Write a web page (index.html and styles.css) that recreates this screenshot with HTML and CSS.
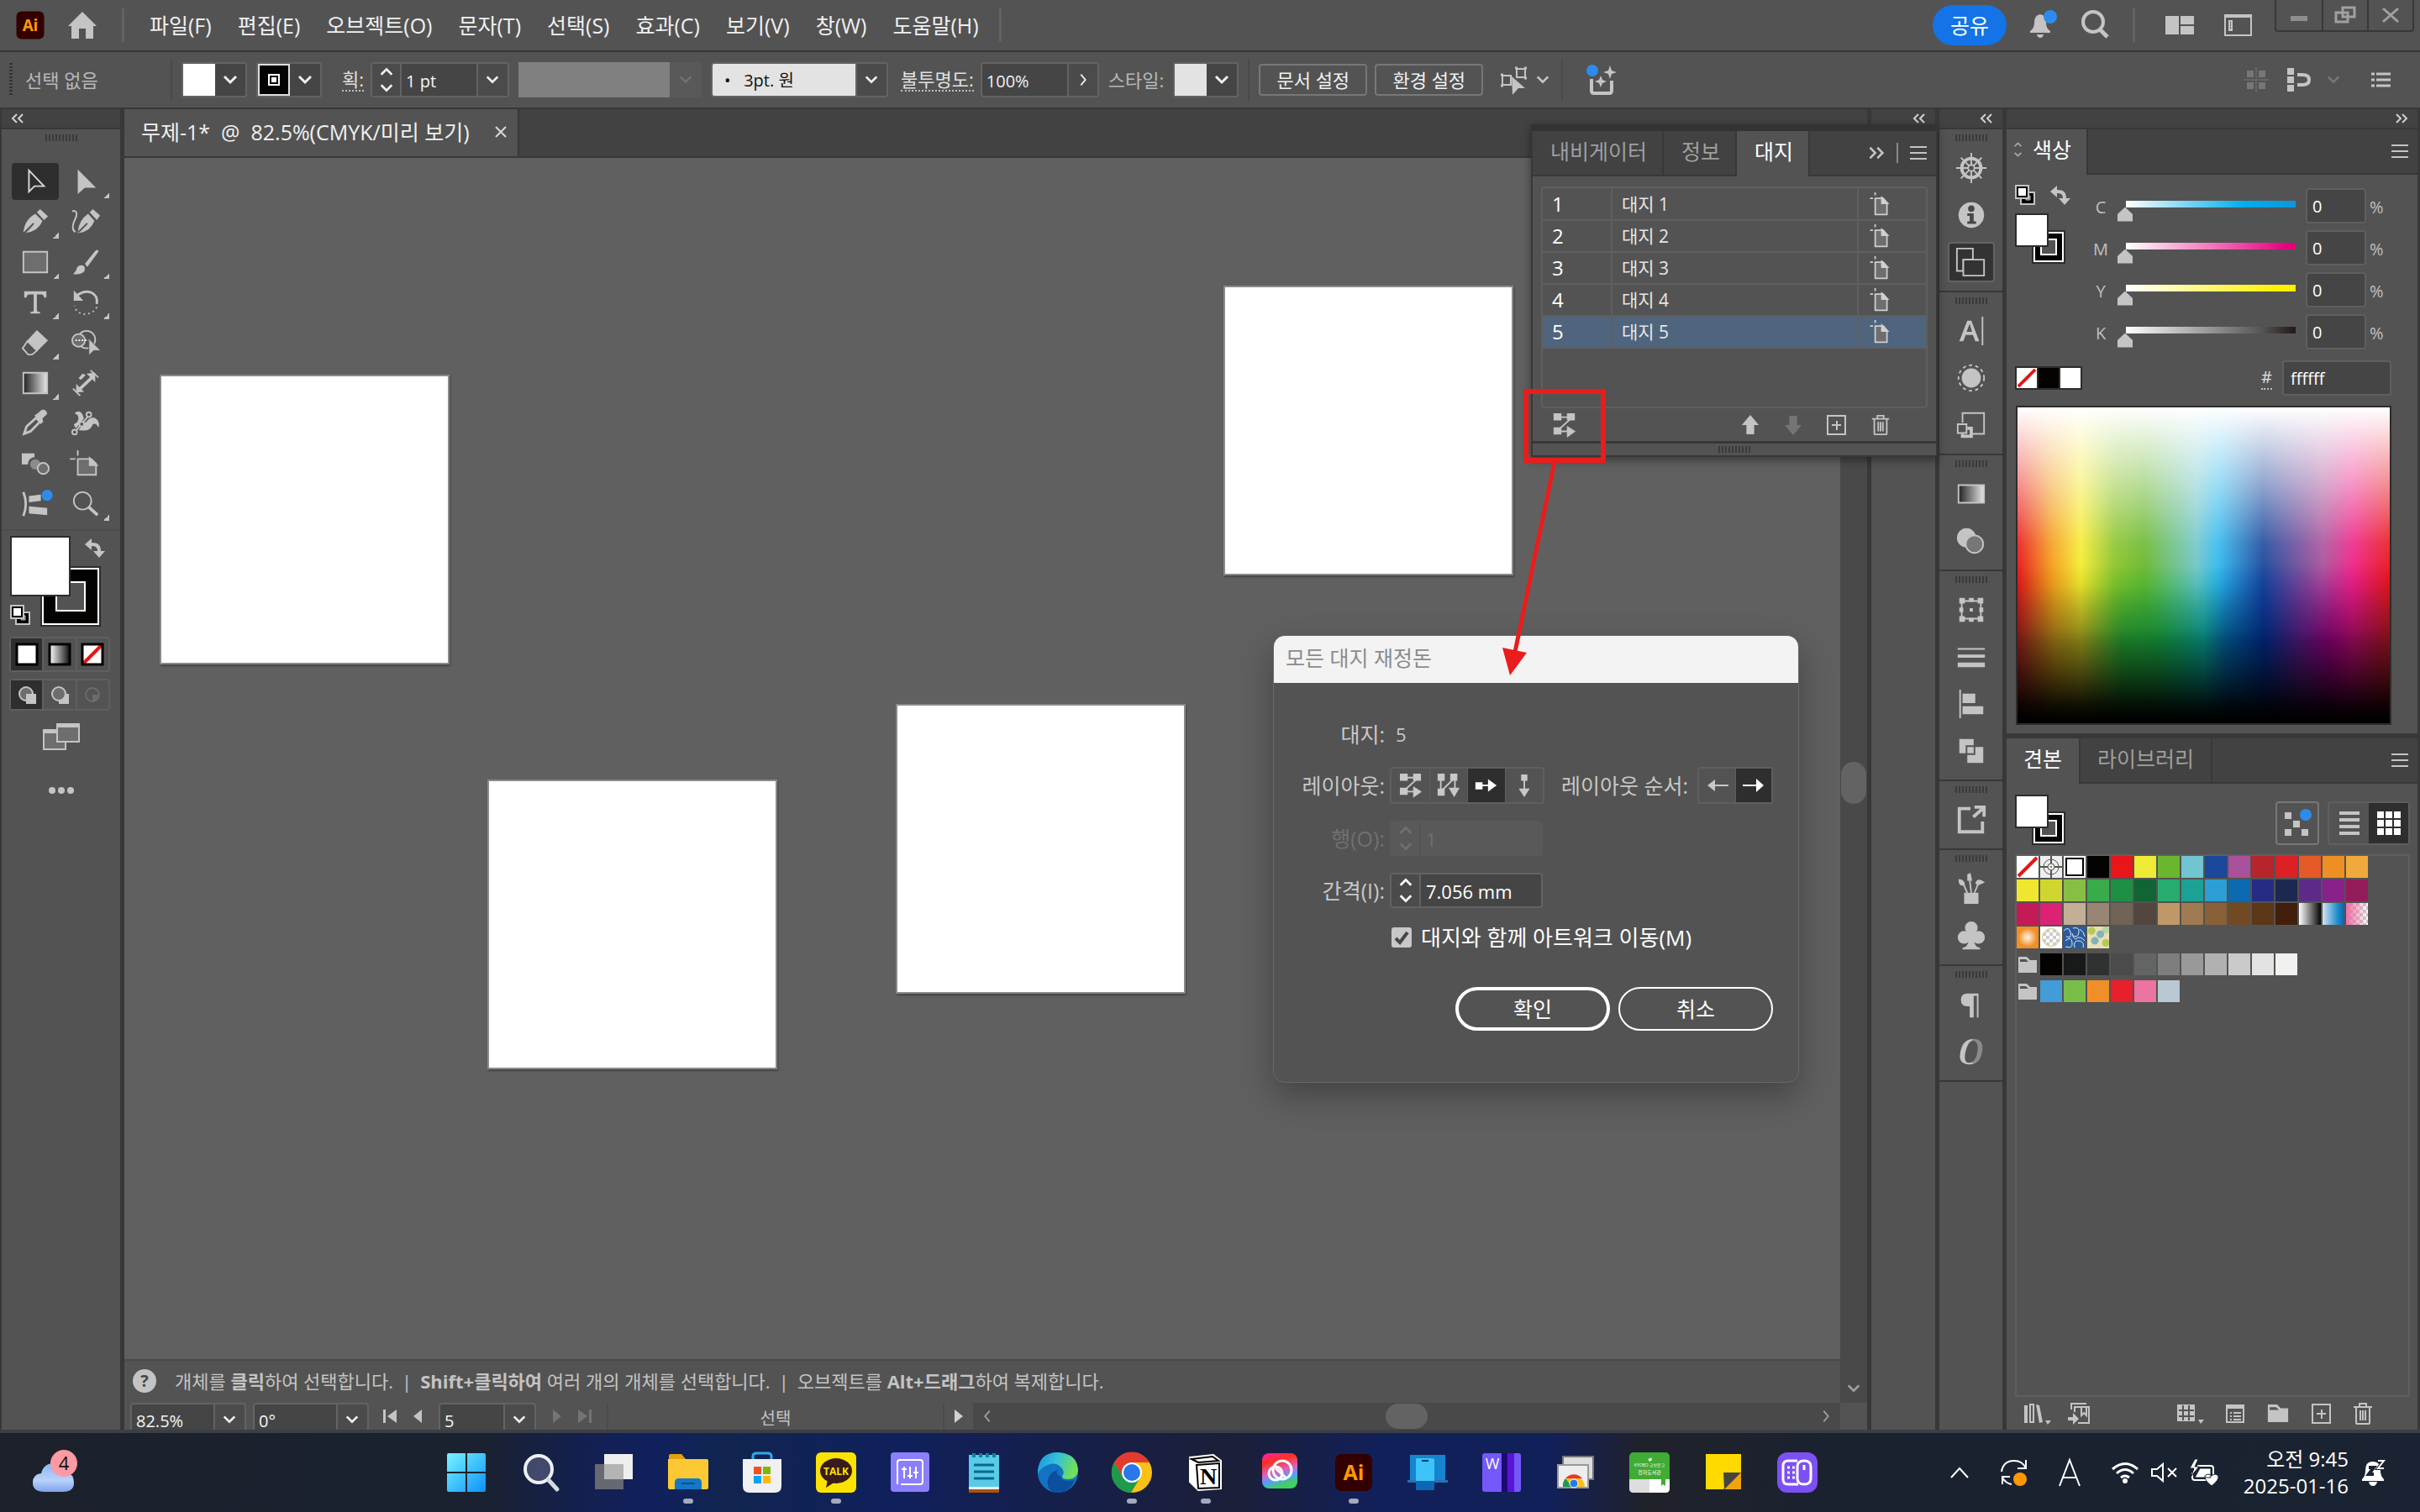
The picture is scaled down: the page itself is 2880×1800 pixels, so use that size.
FILE: index.html
```html
<!DOCTYPE html>
<html lang="ko">
<head>
    <meta charset="UTF-8">
    <meta name="viewport" content="width=device-width, initial-scale=1.0">
    <title>무제-1 - Illustrator</title>
    <link rel="stylesheet" href="styles.css">
</head>
<body>
    <!-- Shared icons -->
    <svg class="defs" aria-hidden="true">
        <defs>
            <linearGradient id="gGray"><stop offset="0" stop-color="#222"/><stop offset="1" stop-color="#e8e8e8"/></linearGradient>
            <linearGradient id="gWhite"><stop offset="0" stop-color="#fff"/><stop offset="1" stop-color="#111"/></linearGradient>
            <linearGradient id="gHalf"><stop offset="0.5" stop-color="#c4c4c4"/><stop offset="0.6" stop-color="#8a8a8a"/></linearGradient>
            <linearGradient id="gWin" x2="1" y2="1"><stop offset="0" stop-color="#7af3ff"/><stop offset="1" stop-color="#0a92fb"/></linearGradient>
            <linearGradient id="gEdge" x2="1" y2="0.3"><stop offset="0" stop-color="#1b8fe0"/><stop offset="0.5" stop-color="#35c1d8"/><stop offset="1" stop-color="#6fe05a"/></linearGradient>
            <linearGradient id="gCloud" x2="0" y2="1"><stop offset="0" stop-color="#8fb4f5"/><stop offset="0.6" stop-color="#b8d2fb"/><stop offset="1" stop-color="#7fa2ea"/></linearGradient>
            <linearGradient id="gCC" x2="0.3" y2="1"><stop offset="0" stop-color="#ff1fb0"/><stop offset="0.3" stop-color="#ff3020"/><stop offset="0.6" stop-color="#e060c0"/><stop offset="0.8" stop-color="#50a0ff"/><stop offset="1" stop-color="#40d060"/></linearGradient>
        </defs>
        <symbol id="i-down" viewBox="0 0 20 20"><path d="M3 6l7 7 7-7" fill="none" stroke="currentColor" stroke-width="3"/></symbol>
        <symbol id="i-right" viewBox="0 0 20 20"><path d="M7 3l6 7-6 7" fill="none" stroke="currentColor" stroke-width="2"/></symbol>
        <symbol id="i-left" viewBox="0 0 20 20"><path d="M13 3l-6 7 6 7" fill="none" stroke="currentColor" stroke-width="2"/></symbol>
        <symbol id="i-updown" viewBox="0 0 20 36"><path d="M3 11l7-7 7 7M3 25l7 7 7-7" fill="none" stroke="currentColor" stroke-width="3"/></symbol>
        <symbol id="i-collapse" viewBox="0 0 16 12"><path d="M7 1L2 6l5 5M14 1L9 6l5 5" fill="none" stroke="currentColor" stroke-width="2"/></symbol>
        <symbol id="i-expand" viewBox="0 0 16 12"><path d="M2 1l5 5-5 5M9 1l5 5-5 5" fill="none" stroke="currentColor" stroke-width="2"/></symbol>
        <symbol id="i-menu" viewBox="0 0 20 16"><path d="M0 1h20M0 8h20M0 15h20" stroke="currentColor" stroke-width="2"/></symbol>
        <symbol id="i-swap" viewBox="0 0 24 24"><path d="M0 8L8 1v5c8 0 11 3 11 10h5l-7 8-7-8h5c0-4-2-6-7-6v5z" fill="currentColor"/></symbol>
        <symbol id="i-default" viewBox="0 0 24 24"><path d="M9 9h14v14H7V9z" fill="#000" stroke="#c4c4c4" stroke-width="2"/><path d="M13 13h5v5h-5z" fill="#535353" stroke="#c4c4c4"/><path d="M1 1h15v15H1z" fill="#fff" stroke="#c4c4c4" stroke-width="2"/><path d="M3 3h11v11H3z" fill="none" stroke="#000" stroke-width="2"/></symbol>
        <symbol id="i-fillstroke" viewBox="0 0 60 60"><path d="M21 21h38v38H21z" fill="#000" stroke="#2c2c2c" stroke-width="2"/><path d="M23 23h34v34H23z" fill="#050202" stroke="#fff" stroke-width="2"/><path d="M31 31h18v18H31z" fill="#535353" stroke="#fff" stroke-width="2"/><path d="M1 1h38v38H1z" fill="#fff" stroke="#2c2c2c" stroke-width="2"/></symbol>
        <symbol id="i-none" viewBox="0 0 26 26"><path d="M0 0h26v26H0z" fill="#fff"/><path d="M2 24L24 2" stroke="#e51616" stroke-width="4"/></symbol>
        <symbol id="i-flow-row" viewBox="0 0 28 32"><path d="M4 6h20L4 24h14" fill="none" stroke="currentColor" stroke-width="2"/><path d="M0 1h10v9H0zM17 1h10v9H17zM0 19h10v9H0zM17 17l11 7-11 8z" fill="currentColor"/></symbol>
        <symbol id="i-flow-col" viewBox="0 0 28 32"><path d="M4 6v18L22 6v14" fill="none" stroke="currentColor" stroke-width="2"/><path d="M0 1h9v9H0zM16 1h9v9h-9zM0 20h9v9H0zM14 19h14l-7 12z" fill="currentColor"/></symbol>
        <symbol id="i-one-row" viewBox="0 0 28 32"><path d="M2 16h16" stroke="currentColor" stroke-width="2"/><path d="M0 12h9v9H0zM16 8l11 8-11 8z" fill="currentColor"/></symbol>
        <symbol id="i-one-col" viewBox="0 0 28 32"><path d="M14 3v18" stroke="currentColor" stroke-width="2"/><path d="M10 2h8v8h-8zM7 20h14l-7 11z" fill="currentColor"/></symbol>
        <symbol id="i-arr-l" viewBox="0 0 28 20"><path d="M6 10h21" stroke="currentColor" stroke-width="2"/><path d="M2 10l9-7v14z" fill="currentColor"/></symbol>
        <symbol id="i-arr-r" viewBox="0 0 28 20"><path d="M1 10h20" stroke="currentColor" stroke-width="2"/><path d="M26 10l-9-8v16z" fill="currentColor"/></symbol>
        <symbol id="i-up" viewBox="0 0 22 26"><path d="M11 0l11 13h-6v12H6V13H0z" fill="currentColor"/></symbol>
        <symbol id="i-dn" viewBox="0 0 22 26"><path d="M11 26L0 13h6V1h10v12h6z" fill="currentColor"/></symbol>
        <symbol id="i-plus" viewBox="0 0 24 26"><path d="M1 2h21v22H1zM12 8v11M6 13h11" fill="none" stroke="currentColor" stroke-width="2"/></symbol>
        <symbol id="i-trash" viewBox="0 0 22 28"><path d="M0 6h22M7 5V2h8v3M3 7v18q0 1 1 1h14q1 0 1-1V7M8 10v12M11 10v12M14 10v12" fill="none" stroke="currentColor" stroke-width="2"/></symbol>
        <symbol id="i-page" viewBox="0 0 26 32"><path d="M8 8h11l5 6v16H8z" fill="#6e6e6e" stroke="currentColor" stroke-width="2"/><path d="M17 7l8 8h-8zM8 0v4M1 8h4" fill="currentColor" stroke="currentColor" stroke-width="2"/></symbol>
        <symbol id="i-folder" viewBox="0 0 24 20"><path d="M1 0h10l4 4h8v15H1z" fill="currentColor"/><path d="M3 3h7l3 3H3z" fill="#535353"/></symbol>
        <symbol id="i-ai" viewBox="0 0 48 48"><rect x="2" y="2" width="44" height="44" rx="8" fill="#330000"/><text x="24" y="33" text-anchor="middle" font-family="Open Sans" font-weight="700" font-size="25" fill="#ff9a00">Ai</text></symbol>
    </svg>

    <header class="menubar">
        <svg class="logo" viewBox="0 0 48 48"><use href="#i-ai"/></svg>
        <button class="plain" aria-label="홈"><svg class="home" viewBox="0 0 36 32"><path d="M18 0L1 17h4v15h9V20h8v12h9V17h4z" fill="#c4c4c4"/></svg></button>
        <i class="vline"></i>
        <nav>
            <a href="#">파일(F)</a><a href="#">편집(E)</a><a href="#">오브젝트(O)</a><a href="#">문자(T)</a><a href="#">선택(S)</a><a href="#">효과(C)</a><a href="#">보기(V)</a><a href="#">창(W)</a><a href="#">도움말(H)</a>
        </nav>
        <i class="vline"></i>
        <div class="top-right">
            <button class="share">공유</button>
            <button class="plain" aria-label="알림"><svg width="36" height="36" viewBox="0 0 36 36"><path d="M14 5q7 1 7 10 0 7 5 10v2H2v-2q5-3 5-10 0-9 7-10zM10 29h8q-1 4-4 4t-4-4z" fill="#c4c4c4"/><circle cx="26" cy="8" r="8" fill="#2d8ceb"/></svg></button>
            <button class="plain" aria-label="검색"><svg width="36" height="36" viewBox="0 0 36 36"><circle cx="15" cy="14" r="12" fill="none" stroke="#c4c4c4" stroke-width="4"/><path d="M23 23l9 9" stroke="#c4c4c4" stroke-width="5"/></svg></button>
            <i class="vline"></i>
            <button class="plain" aria-label="문서 정렬"><svg width="34" height="24" viewBox="0 0 34 24"><path d="M0 1h16v22H0zM18 1h16v10H18zM18 13h16v10H18z" fill="#c4c4c4"/></svg></button>
            <button class="plain" aria-label="작업 영역"><svg width="34" height="28" viewBox="0 0 34 28"><path d="M1 2h31v24H1z" fill="none" stroke="#c4c4c4" stroke-width="2"/><path d="M1 1h31v4H1zM5 8h5v13H5z" fill="#c4c4c4"/><path d="M7 11h1M7 14h1M7 17h1" stroke="#535353" stroke-width="2"/></svg></button>
        </div>
        <div class="win-buttons">
            <button aria-label="최소화"><svg width="20" height="24" viewBox="0 0 20 24"><path d="M0 13h20v6H0z" fill="#8e8e8e"/></svg></button>
            <button aria-label="복원"><svg width="26" height="24" viewBox="0 0 26 24"><path d="M10 3h14v11H10zM2 9h14v11H2z" fill="#535353" stroke="#a0a0a0" stroke-width="3"/></svg></button>
            <button aria-label="닫기"><svg width="24" height="20" viewBox="0 0 24 20"><path d="M3 2l18 16M21 2L3 18" stroke="#a0a0a0" stroke-width="3"/></svg></button>
        </div>
    </header>

    <section class="options">
        <i class="dots"></i>
        <span class="sel-name">선택 없음</span>
        <i class="hair"></i>
        <button class="swatch-drop" aria-label="칠"><b class="sw white"></b><svg><use href="#i-down"/></svg></button>
        <button class="swatch-drop" aria-label="획 색상"><b class="sw black"></b><svg><use href="#i-down"/></svg></button>
        <label class="under stroke-label" for="stroke">획:</label>
        <div class="field stroke-field">
            <button class="stepper" aria-label="획 단계"><svg><use href="#i-updown"/></svg></button>
            <select id="stroke" class="drop"><option>1 pt</option></select>
        </div>
        <div class="profile"><i></i><svg><use href="#i-down"/></svg></div>
        <select class="drop brush" aria-label="브러쉬"><option>•&nbsp;&nbsp; 3pt. 원</option></select>
        <label class="under" for="opacity">불투명도:</label>
        <div class="field opacity"><input id="opacity" value="100%"><button class="go" aria-label="불투명도 슬라이더"><svg><use href="#i-right"/></svg></button></div>
        <span class="style-label">스타일:</span>
        <button class="swatch-drop" aria-label="그래픽 스타일"><b class="sw light"></b><svg><use href="#i-down"/></svg></button>
        <i class="hair"></i>
        <button class="outline">문서 설정</button>
        <button class="outline">환경 설정</button>
        <button class="plain similar" aria-label="유사 오브젝트 선택"><svg width="34" height="34" viewBox="0 0 34 34"><path d="M3 12h10v11H3zM20 4h10v10H20z" fill="none" stroke="#c4c4c4" stroke-width="2"/><path d="M14 13l16 14h-8l-7 8z" fill="#c4c4c4"/><path d="M1 11h3M1 24h3M18 3h3M29 3h3M29 15h3" stroke="#c4c4c4" stroke-width="3"/></svg><svg class="sm"><use href="#i-down"/></svg></button>
        <i class="hair"></i>
        <button class="plain" aria-label="생성"><svg width="38" height="38" viewBox="0 0 38 38"><path d="M6 18v14q0 3 3 3h18q3 0 3-3V20" fill="none" stroke="#c4c4c4" stroke-width="4"/><circle cx="7" cy="8" r="7" fill="#2d8ceb"/><path d="M28 2l2 6 6 2-6 2-2 6-2-6-6-2 6-2zM17 14l2 5 5 2-5 2-2 5-2-5-5-2 5-2z" fill="#c4c4c4"/></svg></button>
        <div class="opt-right">
            <svg width="30" height="30" viewBox="0 0 30 30"><path d="M4 4h8v8H4zM18 4h8v8h-8zM4 18h8v8H4zM18 18h8v8h-8z" fill="#777"/><path d="M0 15h30M15 0v30" stroke="#656565" stroke-width="2"/></svg>
            <svg width="30" height="28" viewBox="0 0 30 28"><path d="M0 0h8v8H0zM0 10h8v8H0zM0 20h8v8H0z" fill="#c4c4c4"/><path d="M12 8h6q8 0 8 6t-8 6h-6" fill="none" stroke="#c4c4c4" stroke-width="4"/></svg>
            <svg class="dim sm"><use href="#i-down"/></svg>
            <svg width="24" height="18" viewBox="0 0 24 18"><path d="M0 2h4M6 2h17M0 9h4M6 9h17M0 16h4M6 16h17" stroke="#c4c4c4" stroke-width="3"/></svg>
        </div>
    </section>

    <main class="work">
        <aside class="tools">
            <div class="dock-head"><svg><use href="#i-collapse"/></svg></div>
            <i class="grip"></i>
            <div class="tool-grid">
                <button class="on" aria-label="선택"><svg viewBox="0 0 36 36"><path d="M10 4v27l7-7h12z" fill="none" stroke="#d8d8d8" stroke-width="2"/></svg></button>
                <button class="more" aria-label="직접 선택"><svg viewBox="0 0 36 36"><path d="M8 3v31l9-8h14z" fill="#c4c4c4"/></svg></button>
                <button class="more" aria-label="펜"><svg viewBox="0 0 36 36"><path d="M3 32Q4 16 18 8l9 9Q22 30 6 32l10-10" fill="#c4c4c4"/><path d="M4 32l12-12" stroke="#535353" stroke-width="2"/><path d="M20 6l4-4 10 9-5 5z" fill="#c4c4c4"/></svg></button>
                <button aria-label="곡률"><svg viewBox="0 0 36 36"><path d="M8 32Q9 16 21 8l8 9Q24 30 10 32" fill="#c4c4c4"/><path d="M9 31l11-11" stroke="#535353" stroke-width="2"/><path d="M23 6l4-4 9 8-4 6z" fill="#c4c4c4"/><path d="M1 5c5-3 7 3 4 9s-5 14 0 17" fill="none" stroke="#c4c4c4" stroke-width="2"/></svg></button>
                <button class="more" aria-label="사각형"><svg viewBox="0 0 36 36"><path d="M3 5h30v26H3z" fill="#6e6e6e" stroke="#c4c4c4" stroke-width="2"/></svg></button>
                <button class="more" aria-label="브러쉬 도구"><svg viewBox="0 0 36 36"><path d="M2 33q4-3 5-8 3-5 9-2 3 6-3 9-5 2-11 1zM17 20L30 4q4-3 4 1L20 24z" fill="#c4c4c4"/></svg></button>
                <button class="more" aria-label="문자 도구"><svg viewBox="0 0 36 36"><path d="M4 4h28v8h-3q0-4-4-4h-5v20q0 2 4 2v2H12v-2q4 0 4-2V8h-5q-4 0-4 4H4z" fill="#c4c4c4"/></svg></button>
                <button class="more" aria-label="회전"><svg viewBox="0 0 36 36"><path d="M6 10C20-1 34 6 32 20" fill="none" stroke="#c4c4c4" stroke-width="3"/><path d="M3 3v13h12z" fill="#c4c4c4"/><path d="M32 24C26 36 6 36 4 22" fill="none" stroke="#c4c4c4" stroke-width="2" stroke-dasharray="2 4"/></svg></button>
                <button class="more" aria-label="지우개"><svg viewBox="0 0 36 36"><path d="M20 2l14 13-13 13L8 15z" fill="#c4c4c4"/><path d="M8 16l12 12-6 5H9l-7-8z" fill="none" stroke="#c4c4c4" stroke-width="2"/></svg></button>
                <button aria-label="도형 구성"><svg viewBox="0 0 36 36"><circle cx="19" cy="14" r="11" fill="none" stroke="#c4c4c4" stroke-width="2"/><circle cx="9" cy="15" r="8" fill="#6e6e6e" stroke="#c4c4c4" stroke-width="2"/><path d="M5 15h20" stroke="#fff" stroke-width="2" stroke-dasharray="2 2"/><path d="M22 13v21l6-6h9z" fill="#c4c4c4" stroke="#535353"/></svg></button>
                <button class="more" aria-label="그레이디언트"><svg viewBox="0 0 36 36"><path d="M3 5h30v26H3z" fill="url(#gGray)" stroke="#c4c4c4" stroke-width="2"/></svg></button>
                <button aria-label="치수"><svg viewBox="0 0 36 36"><path d="M8 28L28 9" stroke="#c4c4c4" stroke-width="4"/><path d="M6 30V19l10 10zM30 5v12L19 6zM9 12l5-6 4 2-6 6z" fill="#c4c4c4"/><path d="M2 25l9 9M24 2l10 9" stroke="#c4c4c4" stroke-width="2"/></svg></button>
                <button aria-label="스포이드"><svg viewBox="0 0 36 36"><path d="M4 31l3-9L19 11l5 5-12 12z" fill="none" stroke="#c4c4c4" stroke-width="3"/><path d="M17 8l3-2 6-5q6-1 7 5l-6 6 1 4-3 3z" fill="#c4c4c4"/></svg></button>
                <button aria-label="퍼펫 뒤틀기"><svg viewBox="0 0 36 36"><path d="M4 5q8-6 11 5l3 7q8-11 15-3 3 5 1 9-3-6-7-4-3 9-13 8-9 0-11-8 8-3 5-11z" fill="#c4c4c4"/><path d="M4 29L22 8" stroke="#535353" stroke-width="4"/><path d="M4 29L22 8" stroke="#c4c4c4" stroke-width="2"/><circle cx="4" cy="29" r="3" fill="#535353" stroke="#c4c4c4" stroke-width="2"/><circle cx="13" cy="19" r="3" fill="#535353" stroke="#c4c4c4" stroke-width="2"/><circle cx="22" cy="7" r="3" fill="#535353" stroke="#c4c4c4" stroke-width="2"/></svg></button>
                <button aria-label="블렌드"><svg viewBox="0 0 36 36"><path d="M1 5h16v14H1z" fill="#c4c4c4"/><circle cx="18" cy="19" r="8" fill="#8b8b8b" stroke="#535353" stroke-width="3"/><circle cx="28" cy="24" r="7" fill="#6e6e6e" stroke="#c4c4c4" stroke-width="2"/></svg></button>
                <button aria-label="대지 도구"><svg viewBox="0 0 36 36"><path d="M8 12h17l6 6v14H8z" fill="#6e6e6e" stroke="#c4c4c4" stroke-width="2"/><path d="M23 11l9 9h-9zM8 1v7M-2 12h7" fill="#c4c4c4" stroke="#c4c4c4" stroke-width="2"/></svg></button>
                <button aria-label="교차"><svg viewBox="0 0 36 36"><path d="M3 3q6 15 0 30" fill="none" stroke="#c4c4c4" stroke-width="3"/><path d="M10 8l15-2v8l-15 2zM10 21l23 2v9l-23-2z" fill="#c4c4c4"/><circle cx="33" cy="7" r="7" fill="#2d8ceb"/></svg></button>
                <button class="more" aria-label="돋보기"><svg viewBox="0 0 36 36"><circle cx="14" cy="14" r="11" fill="none" stroke="#c4c4c4" stroke-width="2"/><path d="M22 22l11 10" stroke="#c4c4c4" stroke-width="4"/></svg></button>
            </div>
            <div class="colors">
                <svg class="big-fs" viewBox="0 0 108 108"><path d="M37 37h70v70H37z" fill="#050202" stroke="#2c2c2c" stroke-width="2"/><path d="M39 39h66v66H39z" fill="#050202" stroke="#fff" stroke-width="2"/><path d="M55 55h34v34H55z" fill="#535353" stroke="#fff" stroke-width="2"/><path d="M1 1h70v70H1z" fill="#fff" stroke="#2c2c2c" stroke-width="2"/></svg>
                <svg class="swap"><use href="#i-swap"/></svg>
                <svg class="deflt"><use href="#i-default"/></svg>
            </div>
            <div class="modes">
                <button class="on" aria-label="색상"><svg viewBox="0 0 26 26"><path d="M1 1h24v24H1z" fill="#fff" stroke="#000" stroke-width="3"/></svg></button>
                <button aria-label="그레이디언트 칠"><svg viewBox="0 0 26 26"><path d="M1 1h24v24H1z" fill="url(#gWhite)" stroke="#000" stroke-width="3"/></svg></button>
                <button aria-label="없음"><svg viewBox="0 0 26 26"><use href="#i-none"/><path d="M1 1h24v24H1z" fill="none" stroke="#000" stroke-width="3"/></svg></button>
            </div>
            <div class="modes low">
                <button class="on" aria-label="표준 그리기"><svg viewBox="0 0 26 26"><circle cx="12" cy="12" r="8" fill="#6e6e6e" stroke="#c4c4c4" stroke-width="2"/><path d="M12 12h12v12H12z" fill="#c4c4c4"/></svg></button>
                <button aria-label="배경 그리기"><svg viewBox="0 0 26 26"><path d="M12 12h12v12H12z" fill="#c4c4c4"/><circle cx="12" cy="12" r="8" fill="#6e6e6e" stroke="#c4c4c4" stroke-width="2"/></svg></button>
                <button aria-label="내부 그리기"><svg viewBox="0 0 26 26"><circle cx="13" cy="13" r="8" fill="none" stroke="#6c6c6c" stroke-width="2"/><path d="M13 13h7v5l-4 3h-3z" fill="#6c6c6c"/></svg></button>
            </div>
            <button class="plain screen" aria-label="화면 모드"><svg width="44" height="34" viewBox="0 0 44 34"><path d="M1 9h26v23H1z" fill="#6e6e6e" stroke="#c4c4c4" stroke-width="2"/><path d="M17 2h26v21H17z" fill="#6e6e6e" stroke="#c4c4c4" stroke-width="2"/><path d="M17 1h26v5H17zM1 8h15v5H1z" fill="#c4c4c4"/></svg></button>
            <button class="plain dots3" aria-label="도구 모음 편집"><svg width="30" height="8" viewBox="0 0 30 8"><circle cx="4" cy="4" r="4" fill="#c4c4c4"/><circle cx="15" cy="4" r="4" fill="#c4c4c4"/><circle cx="26" cy="4" r="4" fill="#c4c4c4"/></svg></button>
        </aside>

        <section class="document">
            <div class="doc-tabs"><div class="doc-tab"><span>무제-1*&nbsp; @&nbsp; 82.5%(CMYK/미리 보기)</span><button class="plain" aria-label="탭 닫기"><svg width="14" height="14" viewBox="0 0 14 14"><path d="M1 1l12 12M13 1L1 13" stroke="#d8d8d8" stroke-width="2"/></svg></button></div></div>
            <div class="view">
                <div class="canvas">
                    <div class="artboard a1"></div>
                    <div class="artboard a2"></div>
                    <div class="artboard a3"></div>
                    <div class="artboard a4"></div>
                </div>
                <div class="vscroll"><i></i><svg><use href="#i-down"/></svg></div>
                <div class="hint">
                    <svg width="28" height="28" viewBox="0 0 28 28"><circle cx="14" cy="14" r="14" fill="#c4c4c4"/><text x="14" y="21" text-anchor="middle" font-family="Open Sans" font-weight="700" font-size="20" fill="#474747">?</text></svg>
                    <p>개체를 <b>클릭</b>하여 선택합니다.<i>|</i><b>Shift+클릭하여</b> 여러 개의 개체를 선택합니다.<i>|</i>오브젝트를 <b>Alt+드래그</b>하여 복제합니다.</p>
                </div>
                <div class="status">
                    <select class="drop" aria-label="확대"><option>82.5%</option></select>
                    <select class="drop" aria-label="회전 각도"><option>0°</option></select>
                    <button class="plain nav" aria-label="처음"><svg width="18" height="16" viewBox="0 0 18 16"><path d="M1 0h3v16H1zM17 0v16L6 8z" fill="#c4c4c4"/></svg></button>
                    <button class="plain nav" aria-label="이전"><svg width="12" height="16" viewBox="0 0 12 16"><path d="M11 0v16L1 8z" fill="#c4c4c4"/></svg></button>
                    <select class="drop boards" aria-label="대지 번호"><option>5</option></select>
                    <button class="plain nav" aria-label="다음"><svg width="12" height="16" viewBox="0 0 12 16"><path d="M1 0v16l10-8z" fill="#747474"/></svg></button>
                    <button class="plain nav" aria-label="마지막"><svg width="18" height="16" viewBox="0 0 18 16"><path d="M14 0h3v16h-3zM1 0v16l11-8z" fill="#747474"/></svg></button>
                    <span class="state">선택</span>
                    <button class="plain play" aria-label="상태 메뉴"><svg width="12" height="16" viewBox="0 0 12 16"><path d="M1 0v16l10-8z" fill="#d0d0d0"/></svg></button>
                    <div class="hscroll"><svg><use href="#i-left"/></svg><i></i><svg><use href="#i-right"/></svg></div>
                </div>
            </div>
        </section>

        <aside class="spare"><div class="dock-head end"><svg><use href="#i-collapse"/></svg></div></aside>

        <aside class="icon-dock">
            <div class="dock-head end"><svg><use href="#i-collapse"/></svg></div>
            <div class="group">
                <i class="grip"></i>
                <button aria-label="내비게이터"><svg viewBox="0 0 40 40"><circle cx="20" cy="20" r="12" fill="none" stroke="#c4c4c4" stroke-width="4"/><path d="M20 1v38M1 20h38M7 7l26 26M33 7L7 33" stroke="#c4c4c4" stroke-width="2"/><circle cx="20" cy="20" r="4" fill="#535353" stroke="#c4c4c4" stroke-width="2"/></svg></button>
                <button aria-label="정보"><svg viewBox="0 0 40 40"><circle cx="20" cy="20" r="16" fill="#c4c4c4"/><circle cx="20" cy="12" r="4" fill="#474747"/><path d="M15 18h8v10h3v3H15v-3h3v-7h-3z" fill="#474747"/></svg></button>
                <button class="on" aria-label="대지"><svg viewBox="0 0 40 40"><path d="M2 3h20v14h-12v14H2z" fill="none" stroke="#c4c4c4" stroke-width="2"/><path d="M10 17h26v20H10z" fill="#333" stroke="#c4c4c4" stroke-width="2"/></svg></button>
            </div>
            <div class="group">
                <i class="grip"></i>
                <button aria-label="문자"><svg viewBox="0 0 40 40"><path d="M5 33L15 7h5l10 26h-5l-3-8H13l-3 8zM14 21h7l-3-10z" fill="#c4c4c4"/><path d="M34 2v36" stroke="#c4c4c4" stroke-width="2"/></svg></button>
                <button aria-label="모양"><svg viewBox="0 0 40 40"><circle cx="20" cy="20" r="12" fill="#c4c4c4"/><circle cx="20" cy="20" r="16" fill="none" stroke="#c4c4c4" stroke-width="2" stroke-dasharray="4 4"/></svg></button>
                <button aria-label="에셋"><svg viewBox="0 0 40 40"><path d="M9 17V5h27v26H22M3 19h11v11H3z" fill="none" stroke="#c4c4c4" stroke-width="2"/><path d="M15 24h5v10h-11v-3" fill="none" stroke="#c4c4c4" stroke-width="4"/></svg></button>
            </div>
            <div class="group">
                <i class="grip"></i>
                <button aria-label="그레이디언트 패널"><svg viewBox="0 0 40 40"><path d="M4 9h32v22H4z" fill="url(#gGray)" stroke="#c4c4c4" stroke-width="2"/></svg></button>
                <button aria-label="투명도"><svg viewBox="0 0 40 40"><circle cx="14" cy="16" r="12" fill="#c4c4c4"/><circle cx="24" cy="24" r="11" fill="#777" stroke="#c4c4c4" stroke-width="2"/></svg></button>
            </div>
            <div class="group">
                <i class="grip"></i>
                <button aria-label="변형"><svg viewBox="0 0 40 40"><path d="M8 9h24v22H8z" fill="none" stroke="#c4c4c4" stroke-width="2"/><path d="M5 5h7v7H5zM17 5h6v5h-6zM28 5h7v7h-7zM5 17h5v6H5zM30 17h5v6h-5zM5 28h7v7H5zM17 30h6v5h-6zM28 28h7v7h-7zM18 18h4v4h-4z" fill="#c4c4c4"/></svg></button>
                <button aria-label="획"><svg viewBox="0 0 40 40"><path d="M3 9h34v2H3zM3 17h34v4H3zM3 27h34v6H3z" fill="#c4c4c4"/></svg></button>
                <button aria-label="정렬"><svg viewBox="0 0 40 40"><path d="M5 2h2v36H5zM9 7h16v12H9zM9 23h26v10H9z" fill="#c4c4c4"/></svg></button>
                <button aria-label="패스파인더"><svg viewBox="0 0 40 40"><path d="M5 5h18v8H13v10H5zM25 15h10v20H15V25h10zM15 15h8v8h-8z" fill="#c4c4c4"/></svg></button>
            </div>
            <div class="group">
                <i class="grip"></i>
                <button aria-label="에셋 내보내기"><svg viewBox="0 0 40 40"><path d="M19 6H5v29h29V22" fill="none" stroke="#c4c4c4" stroke-width="4"/><path d="M24 2h14v14h-4V9L24 18l-3-3 10-9h-7z" fill="#c4c4c4"/></svg></button>
            </div>
            <div class="group">
                <i class="grip"></i>
                <button aria-label="브러쉬"><svg viewBox="0 0 40 40"><path d="M11 25h18v14H11zM15 2l4-2 2 10h-6zM4 8q8 0 8 8H8q-4 0-4-8zM25 13q3-8 12-1l-9 4z" fill="#c4c4c4"/><path d="M15 25L10 14M20 25L18 9M24 25l5-12" stroke="#c4c4c4" stroke-width="2"/></svg></button>
                <button aria-label="심볼"><svg viewBox="0 0 40 40"><circle cx="20" cy="10" r="8" fill="#c4c4c4"/><circle cx="11" cy="22" r="8" fill="#c4c4c4"/><circle cx="29" cy="22" r="8" fill="#c4c4c4"/><path d="M17 15h6l1 14q2 6 7 6v2H9v-2q5 0 7-6z" fill="#c4c4c4"/></svg></button>
            </div>
            <div class="group">
                <i class="grip"></i>
                <button aria-label="단락"><svg viewBox="0 0 40 40"><path d="M18 22h-3q-8 0-8-8t8-8h14v30h-2V9h-4v27h-5z" fill="#c4c4c4"/></svg></button>
                <button aria-label="OpenType"><svg viewBox="0 0 40 40"><path fill-rule="evenodd" d="M22 4q13 0 12 13-2 19-16 19-14 0-12-13Q8 5 22 4zM22 6q-7 1-10 18-1 10 5 10 9 0 11-16 1-11-6-12z" fill="url(#gHalf)"/></svg></button>
            </div>
        </aside>

        <aside class="panels">
            <div class="dock-head end"><svg><use href="#i-expand"/></svg></div>
            <section class="panel color-panel">
                <div class="tabs"><button class="tab active"><svg class="tw"><use href="#i-updown"/></svg>색상</button><button class="plain pmenu" aria-label="색상 메뉴"><svg><use href="#i-menu"/></svg></button></div>
                <div class="color-body">
                    <div class="color-left">
                        <svg class="ic24"><use href="#i-default"/></svg>
                        <svg class="ic24"><use href="#i-swap"/></svg>
                        <svg class="fs60"><use href="#i-fillstroke"/></svg>
                    </div>
                    <div class="sliders">
                        <label for="c">C</label><input id="c" class="c" type="range" value="0"><input aria-label="C 값" value="0"><span>%</span>
                        <label for="m">M</label><input id="m" class="m" type="range" value="0"><input aria-label="M 값" value="0"><span>%</span>
                        <label for="y">Y</label><input id="y" class="y" type="range" value="0"><input aria-label="Y 값" value="0"><span>%</span>
                        <label for="k">K</label><input id="k" class="k" type="range" value="0"><input aria-label="K 값" value="0"><span>%</span>
                    </div>
                </div>
                <div class="hexrow">
                    <div class="mini"><svg><use href="#i-none"/></svg><i class="bk"></i><i></i></div>
                    <label class="under" for="hex">#</label><input id="hex" value="ffffff">
                </div>
                <div class="spectrum"></div>
            </section>
            <section class="panel swatches">
                <div class="tabs"><button class="tab active">견본</button><button class="tab">라이브러리</button><button class="plain pmenu" aria-label="견본 메뉴"><svg><use href="#i-menu"/></svg></button></div>
                <div class="sw-head">
                    <svg class="fs60"><use href="#i-fillstroke"/></svg>
                    <button class="box" aria-label="색상 재지정"><svg width="36" height="36" viewBox="0 0 36 36"><path d="M3 5h8v8H3zM13 15h8v8h-8zM3 25h8v8H3zM23 25h8v8h-8z" fill="#c4c4c4"/><circle cx="28" cy="8" r="7" fill="#2d8ceb"/></svg></button>
                    <div class="toggle"><button aria-label="목록 보기"><svg width="24" height="28" viewBox="0 0 24 28"><path d="M0 2h24M0 10h24M0 18h24M0 26h24" stroke="#c4c4c4" stroke-width="4"/></svg></button><button class="on" aria-label="축소판 보기"><svg width="28" height="28" viewBox="0 0 28 28"><path d="M0 0h8v8H0zM10 0h8v8h-8zM20 0h8v8h-8zM0 10h8v8H0zM10 10h8v8h-8zM20 10h8v8h-8zM0 20h8v8H0zM10 20h8v8h-8zM20 20h8v8h-8z" fill="#fff"/></svg></button></div>
                </div>
                <div class="sw-list"></div>
                <div class="sw-foot">
                    <button class="plain" aria-label="라이브러리 메뉴"><svg width="32" height="26" viewBox="0 0 32 26"><path d="M0 3h4v21H0zM14 2l4 1 4 20-4 1z" fill="#c4c4c4"/><path d="M7 2h4v21H7z" fill="none" stroke="#c4c4c4" stroke-width="2"/><path d="M25 21h7l-4 5z" fill="#c4c4c4"/></svg></button>
                    <button class="plain" aria-label="라이브러리에 추가"><svg width="28" height="26" viewBox="0 0 28 26"><path d="M4 8V1h18M8 11V5h17v19H12M16 5v10l3-3 3 3V5" fill="none" stroke="#c4c4c4" stroke-width="2"/><path d="M0 17h6v-5l7 7-7 7v-5H0z" fill="#c4c4c4"/></svg></button>
                    <i class="grow"></i>
                    <button class="plain" aria-label="견본 유형"><svg width="32" height="26" viewBox="0 0 32 26"><path d="M0 2h21v20H0z" fill="#c4c4c4"/><path d="M2 9h18M2 16h18M7 3v18M14 3v18" stroke="#535353" stroke-width="2"/><path d="M25 20h7l-4 5z" fill="#c4c4c4"/></svg></button>
                    <button class="plain" aria-label="견본 옵션"><svg width="22" height="26" viewBox="0 0 22 26"><path d="M1 3h20v20H1zM5 12h2M9 12h9M5 16h2M9 16h9M5 20h2M9 20h9" fill="none" stroke="#c4c4c4" stroke-width="2"/><path d="M0 2h22v5H0z" fill="#c4c4c4"/></svg></button>
                    <button class="plain" aria-label="새 그룹"><svg width="28" height="22" viewBox="0 0 24 20"><use href="#i-folder"/></svg></button>
                    <button class="plain" aria-label="새 견본"><svg width="24" height="26"><use href="#i-plus"/></svg></button>
                    <button class="plain" aria-label="견본 삭제"><svg width="22" height="28"><use href="#i-trash"/></svg></button>
                </div>
            </section>
        </aside>
    </main>

    <!-- Floating artboards panel -->
    <section class="float">
        <div class="tabs"><button class="tab">내비게이터</button><button class="tab">정보</button><button class="tab active">대지</button><span class="fmenu"><svg class="ex"><use href="#i-expand"/></svg><i></i><svg class="mn"><use href="#i-menu"/></svg></span></div>
        <div class="list">
            <table>
                <tr><td>1</td><td>대지 1</td><td><svg><use href="#i-page"/></svg></td></tr>
                <tr><td>2</td><td>대지 2</td><td><svg><use href="#i-page"/></svg></td></tr>
                <tr><td>3</td><td>대지 3</td><td><svg><use href="#i-page"/></svg></td></tr>
                <tr><td>4</td><td>대지 4</td><td><svg><use href="#i-page"/></svg></td></tr>
                <tr class="on"><td>5</td><td>대지 5</td><td><svg><use href="#i-page"/></svg></td></tr>
            </table>
        </div>
        <div class="float-foot">
            <button class="plain" aria-label="모든 대지 재정돈"><svg width="28" height="30"><use href="#i-flow-row"/></svg></button>
            <i class="grow"></i>
            <button class="plain" aria-label="위로"><svg width="22" height="24"><use href="#i-up"/></svg></button>
            <button class="plain off" aria-label="아래로"><svg width="22" height="24"><use href="#i-dn"/></svg></button>
            <button class="plain" aria-label="새 대지"><svg width="24" height="26"><use href="#i-plus"/></svg></button>
            <button class="plain" aria-label="대지 삭제"><svg width="22" height="26"><use href="#i-trash"/></svg></button>
        </div>
        <div class="resize"><i class="grip"></i></div>
    </section>

    <!-- Rearrange dialog -->
    <form class="dialog">
        <h2>모든 대지 재정돈</h2>
        <div class="form">
            <span class="lbl">대지:</span><span class="count">5</span>
            <span class="lbl">레이아웃:</span>
            <div class="layout-row">
                <div class="seg"><button type="button" aria-label="행별 격자"><svg width="26" height="30"><use href="#i-flow-row"/></svg></button><button type="button" aria-label="열별 격자"><svg width="28" height="30"><use href="#i-flow-col"/></svg></button><button type="button" class="on" aria-label="행별 정돈"><svg width="28" height="30"><use href="#i-one-row"/></svg></button><button type="button" aria-label="열별 정돈"><svg width="28" height="30"><use href="#i-one-col"/></svg></button></div>
                <span>레이아웃 순서:</span>
                <div class="seg"><button type="button" aria-label="오른쪽에서 왼쪽"><svg width="28" height="20"><use href="#i-arr-l"/></svg></button><button type="button" class="on" aria-label="왼쪽에서 오른쪽"><svg width="28" height="20"><use href="#i-arr-r"/></svg></button></div>
            </div>
            <label class="lbl off" for="rows">행(O):</label>
            <div class="field off"><button type="button" class="stepper" aria-label="행 단계" disabled><svg><use href="#i-updown"/></svg></button><input id="rows" value="1" disabled></div>
            <label class="lbl" for="gap">간격(I):</label>
            <div class="field"><button type="button" class="stepper" aria-label="간격 단계"><svg><use href="#i-updown"/></svg></button><input id="gap" value="7.056 mm"></div>
            <label class="check"><input type="checkbox" checked>대지와 함께 아트워크 이동(M)</label>
        </div>
        <div class="actions"><button type="button" class="ok">확인</button><button type="button">취소</button></div>
    </form>

    <!-- Red callout from the rearrange button to the dialog -->
    <svg class="callout" viewBox="0 0 130 350" aria-hidden="true"><path d="M26 6h92v82H26z" fill="none" stroke="#ea1c1c" stroke-width="6"/><path d="M60 90L13 316" stroke="#ea1c1c" stroke-width="5"/><path d="M-2 311l29 6-20 27z" fill="#ea1c1c"/></svg>

    <footer class="taskbar">
        <button class="plain weather" aria-label="날씨"><svg width="60" height="56" viewBox="0 0 60 56"><path d="M15 51q-14 0-14-11 0-10 10-11 3-12 15-12 11 1 14 11 10 1 10 12 0 11-13 11z" fill="url(#gCloud)"/><circle cx="38" cy="17" r="16" fill="#ff99a4"/><text x="38" y="25" text-anchor="middle" font-family="Open Sans" font-size="22" fill="#111">4</text></svg></button>
        <div class="apps">
            <button aria-label="시작"><svg viewBox="0 0 48 48"><path d="M1 3q0-2 2-2h20v22H1zM25 1h20q2 0 2 2v20H25zM1 25h22v22H3q-2 0-2-2zM25 25h22v20q0 2-2 2H25z" fill="url(#gWin)"/></svg></button>
            <button aria-label="검색"><svg viewBox="0 0 48 48"><circle cx="22" cy="20" r="16" fill="#424a6b" stroke="#eef1f5" stroke-width="4"/><path d="M33 32l11 12" stroke="#d5dbe2" stroke-width="5" stroke-linecap="round"/></svg></button>
            <button aria-label="작업 보기"><svg viewBox="0 0 48 48"><path d="M12 2h34v30H12z" fill="#eee"/><path d="M1 14h34v30H1z" fill="#777" opacity=".85"/><path d="M12 14h23v18H12z" fill="#b4b4b4"/></svg></button>
            <button class="run" aria-label="파일 탐색기"><svg viewBox="0 0 48 48"><path d="M1 4q0-2 2-2h13l5 6H1z" fill="#e0a010"/><path d="M0 8h46q2 0 2 2v32q0 2-2 2H2q-2 0-2-2z" fill="#fcc934"/><path d="M8 44V36q0-5 5-5h22q5 0 5 5v8z" fill="#1478c8"/><path d="M16 37h16" stroke="#0b4f8c" stroke-width="2"/></svg></button>
            <button aria-label="스토어"><svg viewBox="0 0 48 48"><path d="M13 9V5q0-4 4-4h14q4 0 4 4v4" fill="none" stroke="#30a8ee" stroke-width="3"/><path d="M1 8h46v32q0 8-8 8H9q-8 0-8-8z" fill="#f0f0f2"/><path d="M14 17h9v9h-9z" fill="#f25022"/><path d="M25 17h9v9h-9z" fill="#7fba00"/><path d="M14 28h9v9h-9z" fill="#00a4ef"/><path d="M25 28h9v9h-9z" fill="#ffb900"/></svg></button>
            <button class="run" aria-label="카카오톡"><svg viewBox="0 0 48 48"><rect width="48" height="48" rx="6" fill="#fbe300"/><ellipse cx="24" cy="22" rx="19" ry="15" fill="#391b1b"/><path d="M14 32l-2 10 11-7z" fill="#391b1b"/><text x="24" y="27" text-anchor="middle" font-family="Open Sans" font-weight="700" font-size="12" fill="#fbe300">TALK</text></svg></button>
            <button aria-label="믹서"><svg viewBox="0 0 48 48"><rect x="1" width="46" height="47" rx="4" fill="#8c7ffc"/><path d="M9 38V12q0-3 3-3h24q3 0 3 3v23q0 3-3 3H13M17 17v14M24 17v14M31 17v14M14 20h6M21 28h6M28 24h6" fill="none" stroke="#fff" stroke-width="2"/></svg></button>
            <button aria-label="메모장"><svg viewBox="0 0 48 48"><path d="M6 3h36v38H6z" fill="#58cbe8"/><path d="M6 41h36v3H6z" fill="#eee"/><path d="M6 44h36v4H6z" fill="#a85412"/><path d="M12 15h24M12 23h24M12 31h24" stroke="#05688c" stroke-width="3"/><path d="M12 1v5M20 1v5M28 1v5M36 1v5" stroke="#0a84a4" stroke-width="4"/></svg></button>
            <button aria-label="Edge"><svg viewBox="0 0 48 48"><circle cx="24" cy="24" r="24" fill="#1273c4"/><path d="M0 22Q2 0 24 0q22 1 24 20 0 11-11 12-8 0-8-3 4-6-1-11-7-7-16-3Q3 18 0 26z" fill="url(#gEdge)"/><path d="M28 29q0 7 16 4-6 14-20 15-14-1-12-15 2-10 12-12-4 5 4 8z" fill="#0d4f9c"/></svg></button>
            <button class="run" aria-label="Chrome"><svg viewBox="0 0 48 48"><circle cx="24" cy="24" r="24" fill="#fbc116"/><path d="M3 12A24 24 0 0 1 45 12H24L13 30z" fill="#e33b2e"/><path d="M3 12A24 24 0 0 0 23 48L34 30H14z" fill="#1f9a4b"/><circle cx="24" cy="24" r="12" fill="#fff"/><circle cx="24" cy="24" r="10" fill="#2878ea"/></svg></button>
            <button class="run" aria-label="Notion"><svg viewBox="0 0 48 48"><path d="M5 6l28-3 9 7v33l-27 2-10-10z" fill="#fff" stroke="#fff" stroke-width="2"/><path d="M7 8l25-3 7 5-24 2zM13 15l27-2v29l-25 1z" fill="#fff" stroke="#000" stroke-width="2"/><text x="27" y="38" text-anchor="middle" font-family="Liberation Serif" font-weight="700" font-size="28" fill="#000">N</text></svg></button>
            <button aria-label="Creative Cloud"><svg viewBox="0 0 48 48"><rect x="3" y="1" width="42" height="42" rx="8" fill="url(#gCC)"/><circle cx="19" cy="25" r="8" fill="none" stroke="#fff" stroke-width="3"/><circle cx="27" cy="21" r="11" fill="none" stroke="#fff" stroke-width="3"/><path d="M19 19l12 11" stroke="#fff" stroke-width="3"/></svg></button>
            <button class="run" aria-label="Illustrator"><svg viewBox="0 0 48 48"><use href="#i-ai"/></svg></button>
            <button aria-label="휴대폰 연결"><svg viewBox="0 0 48 48"><path d="M3 3h42v31H3z" fill="#1585d0"/><path d="M0 33h48v3H0z" fill="#2d6fb0"/><path d="M10 8q0-1 1-1h19q2 0 2 2v33q0 3-3 3H10z" fill="#3cc4f6"/><path d="M10 34h22v11H10z" fill="#0d66b4"/><path d="M17 10h8" stroke="#04446f" stroke-width="2"/></svg></button>
            <button aria-label="워크"><svg viewBox="0 0 48 48"><rect x="1" y="1" width="46" height="46" rx="3" fill="#7458fa"/><path d="M24 1h7v46h-7z" fill="#1c0a70"/><path d="M31 1h8v46h-8z" fill="#5a14d8"/><text x="13" y="20" text-anchor="middle" font-family="Open Sans" font-size="18" fill="#fff">W</text></svg></button>
            <button aria-label="원격 데스크톱"><svg viewBox="0 0 48 48"><path d="M9 5h36v27H9z" fill="#ddd" stroke="#777" stroke-width="2"/><path d="M3 15h36v27H3z" fill="#eee" stroke="#999" stroke-width="2"/><path d="M9 41a13 13 0 0 1 26 0z" fill="#fbc116"/><path d="M12 31a13 13 0 0 1 20 0z" fill="#e33b2e"/><path d="M9 41a13 13 0 0 1 3-10l8 10z" fill="#1f9a4b"/><circle cx="22" cy="37" r="5" fill="#2878ea" stroke="#fff"/></svg></button>
            <button aria-label="교보 전자도서관"><svg viewBox="0 0 48 48"><rect width="48" height="48" rx="5" fill="#40ab35"/><path d="M0 32h24v16H5q-5 0-5-5z" fill="#ddd"/><path d="M24 32h24v11q0 5-5 5H24z" fill="#fff"/><path d="M38 32h5v8l-3-2-2 2z" fill="#40ab35"/><path d="M22 7l2 1 2-2 1 3-3 2z" fill="#fff"/><text x="24" y="17" text-anchor="middle" font-family="Open Sans, Noto Sans CJK KR" font-size="5" fill="#fff">KYOBO 교보문고</text><text x="24" y="26" text-anchor="middle" font-family="Noto Sans CJK KR" font-size="6" fill="#fff">전자도서관</text></svg></button>
            <button aria-label="스티커 메모"><svg viewBox="0 0 48 48"><path d="M3 2h42v22L24 44H3z" fill="#ffda00"/><path d="M24 24h21L25 44z" fill="#444"/><path d="M45 24v20H25z" fill="#eea40c"/></svg></button>
            <button aria-label="리모컨"><svg viewBox="0 0 48 48"><rect width="48" height="48" rx="12" fill="#7c50f4"/><path d="M24 10H13q-6 0-6 6v16q0 6 6 6h12M24 17q0-7 8-7t8 7v14q0 7-8 7t-8-7zM32 15v6" fill="none" stroke="#fff" stroke-width="3"/><path d="M12 18h3M18 18h3M12 24h3M18 24h3M12 30h3M18 30h3" stroke="#fff" stroke-width="3"/></svg></button>
        </div>
        <div class="tray">
            <svg width="24" height="16" viewBox="0 0 24 16"><path d="M2 14L12 3l10 11" fill="none" stroke="#fff" stroke-width="2"/></svg>
            <svg width="34" height="34" viewBox="0 0 34 34"><path d="M2 16Q4 3 17 3q10 0 14 9M31 2v10H21M3 31V22h9M3 23q4 7 11 8" fill="none" stroke="#fff" stroke-width="2"/><circle cx="24" cy="25" r="8" fill="#ff9800"/></svg>
            <svg width="26" height="34" viewBox="0 0 26 34"><path d="M1 33L13 2l12 31M5 23h16" fill="none" stroke="#fff" stroke-width="2"/></svg>
            <div class="net">
                <svg width="34" height="28" viewBox="0 0 34 28"><path d="M2 10q15-13 30 0M7 15q10-9 20 0M12 20q5-4 10 0" fill="none" stroke="#fff" stroke-width="3"/><circle cx="17" cy="24" r="3" fill="#fff"/></svg>
                <svg width="32" height="24" viewBox="0 0 32 24"><path d="M1 8h6l7-6v20l-7-6H1zM20 7l10 10M30 7L20 17" fill="none" stroke="#fff" stroke-width="2"/></svg>
                <svg width="34" height="32" viewBox="0 0 34 32"><path d="M9 8h16q3 0 3 3v11q0 3-3 3H6q-3 0-3-3v-6" fill="none" stroke="#fff" stroke-width="2"/><path d="M12 11h13v11H6zM6 0L0 11h5l-3 9 9-11H6l4-9zM26 20q4-4 8 0 1 5-8 12-9-7-8-12 4-4 8 0z" fill="#fff" stroke="#1b2230"/></svg>
            </div>
            <div class="clock"><span>오전 9:45</span><span>2025-01-16</span></div>
            <svg width="28" height="32" viewBox="0 0 28 32"><path d="M12 3q10-1 10 11 0 6 4 10v2H0v-2q4-4 4-10 0-11 8-11zM8 27h10q-1 5-5 5t-5-5z" fill="#fff"/><path d="M8 10h6l-6 8h6M19 2h7l-7 9h7" fill="none" stroke="#1b2230" stroke-width="4"/><path d="M19 2h7l-7 9h7" fill="none" stroke="#fff" stroke-width="2"/></svg>
        </div>
    </footer>

    <script>
        // Swatch library, one array per row
        const rows = [
            ['none', 'reg', 'sel', '#050202', '#e81519', '#eeeb36', '#69b72e', '#70c5d1', '#1b479c', '#a9519a', '#b5252b', '#dd1f26', '#e65a27', '#ee8f24', '#f1a93e'],
            ['#f0e630', '#d0d62e', '#87be43', '#39ab4b', '#1e8f45', '#116434', '#27ab6e', '#1da195', '#2b9fd4', '#0e6ab0', '#272b83', '#1c2850', '#5d2b87', '#88218a', '#941b5a'],
            ['#c41a57', '#db2274', '#c3ae97', '#988573', '#716355', '#52463e', '#c09867', '#a07a50', '#8a6038', '#714a22', '#5c3718', '#421f0c', 'g1', 'g2', 'g3'],
            ['g4', 'p1', 'p2', 'p3'],
            ['folder', '#050202', '#181a1a', '#303232', '#4b4b4b', '#636565', '#7e7e7e', '#999', '#b1b1b1', '#cacaca', '#e3e3e3', '#f1f1ef'],
            ['folder', '#429cd7', '#78bd49', '#f08f28', '#e7202c', '#eb74a1', '#b9c8d2']
        ];
        const list = document.querySelector('.sw-list');
        rows.forEach(colors => {
            const row = document.createElement('div');
            row.className = colors[0] === 'folder' ? 'sw-row group-row' : 'sw-row';
            colors.forEach(c => {
                const cell = document.createElement('i');
                if (c[0] === '#') {
                    cell.style.background = c;
                } else {
                    cell.className = c;
                }
                if (c === 'none') cell.innerHTML = '<svg><use href="#i-none"/></svg>';
                if (c === 'folder') cell.innerHTML = '<svg><use href="#i-folder"/></svg>';
                if (c === 'reg') cell.innerHTML = '<svg viewBox="0 0 26 26"><path d="M13 0v26M0 13h26" stroke="#555" stroke-width="2"/><circle cx="13" cy="13" r="9" fill="none" stroke="#555"/><circle cx="13" cy="13" r="4" fill="#eee" stroke="#555"/><circle cx="13" cy="13" r="1" fill="#555"/></svg>';
                if (c === 'p1') cell.innerHTML = '<b></b>';
                if (c === 'p2') cell.innerHTML = '<svg viewBox="0 0 26 26"><path d="M0 5q6-6 8 2t-5 5M11 2q8-2 7 5t-7 4M19 3q5 3 6 9M2 17q7-6 8 2t-8 5M13 25q-2-9 5-8t5 8M14 15q5-5 11 2M10 8q1 6 4 7" fill="none" stroke="#dfe9f5"/></svg>';
                row.appendChild(cell);
            });
            list.appendChild(row);
        });
    </script>
</body>
</html>
```

FILE: styles.css
```css
:root {
    --bg: #535353;
    --dark: #424242;
    --line: #383838;
    --edge: #636363;
    --field: #454545;
    --icon: #c4c4c4;
    --blue: #1473e6;
}

*, *::before, *::after {
    box-sizing: border-box;
}

body {
    margin: 0;
    height: 100vh;
    display: grid;
    grid-template-rows: 62px 68px 1fr 94px;
    position: relative;
    overflow: hidden;
    background: var(--bg);
    color: #f0f0f0;
    font-family: "Open Sans", "Noto Sans CJK KR", sans-serif;
    font-size: 25px;
    line-height: 30px;
}

button, input, select {
    font: inherit;
    color: inherit;
    margin: 0;
    padding: 0;
    border: 0;
    background: none;
    border-radius: 0;
    min-width: 0;
}

svg {
    display: block;
    flex: none;
    overflow: visible;
}

i, h2, p {
    font-style: normal;
    margin: 0;
}

a {
    color: inherit;
    text-decoration: none;
}

.defs {
    position: absolute;
    width: 0;
    height: 0;
}

.plain {
    display: flex;
    align-items: center;
    color: var(--icon);
}

.grow {
    flex: 1;
}

/* Menu bar */
.menubar {
    display: flex;
    align-items: center;
    border-bottom: 2px solid var(--line);
    padding-left: 18px;
}

.logo {
    width: 36px;
    height: 36px;
    margin-right: 26px;
}

.home {
    width: 36px;
    height: 32px;
}

.vline {
    width: 3px;
    height: 40px;
    background: #626262;
}

.menubar > .vline:nth-of-type(1) {
    margin: 0 30px 0 29px;
}

.menubar nav {
    display: flex;
    gap: 31px;
    margin-right: 24px;
}

.top-right {
    display: flex;
    align-items: center;
    gap: 26px;
    margin-left: auto;
    margin-right: 26px;
}

.top-right .vline {
    margin-right: 10px;
}

.top-right button:last-child {
    margin-left: 10px;
}

.share {
    width: 88px;
    height: 48px;
    border-radius: 24px;
    background: var(--blue);
    color: #fff;
}

.win-buttons {
    display: flex;
    align-self: flex-start;
    margin-right: 7px;
    border: 2px solid var(--line);
    border-top: 0;
    border-radius: 0 0 4px 4px;
}

.win-buttons button {
    width: 54px;
    height: 36px;
    display: grid;
    place-items: center;
}

.win-buttons button + button {
    border-left: 2px solid var(--line);
}

/* Options bar */
.options {
    display: flex;
    align-items: center;
    border-bottom: 2px solid var(--line);
    font-size: 22px;
    padding-left: 11px;
}

.dots {
    width: 4px;
    height: 40px;
    margin-right: 15px;
    background: repeating-linear-gradient(#333 0 2px, transparent 2px 4px);
}

.sel-name {
    width: 173px;
    color: #b8b8b8;
}

.hair {
    width: 2px;
    height: 50px;
    margin-right: 11px;
    background: #4a4a4a;
}

.swatch-drop {
    display: flex;
    align-items: center;
    height: 42px;
    border: 2px solid var(--edge);
    border-radius: 3px;
    margin-right: 11px;
    color: #f0f0f0;
    background: var(--field);
}

.swatch-drop svg {
    width: 20px;
    height: 20px;
    margin: 0 8px;
}

.swatch-drop .sw {
    width: 38px;
    height: 38px;
}

.white {
    background: #fff;
}

.light {
    background: #e3e3e3;
}

.black {
    display: grid;
    place-items: center;
    background: #050202;
    border: 2px solid #ddd;
}

.black::after {
    content: "";
    width: 14px;
    height: 14px;
    border: 2px solid #fff;
    background: linear-gradient(#fff, #fff) no-repeat center / 6px 6px;
}

.under {
    color: #e0e0e0;
    border-bottom: 2px dotted #c0c0c0;
    line-height: 26px;
}

.stroke-label {
    margin: 0 8px 0 13px;
}

.field {
    display: flex;
    height: 42px;
    border: 2px solid var(--edge);
    border-radius: 4px;
    background: var(--field);
    font-size: 20px;
}

.stepper {
    width: 35px;
    display: grid;
    place-items: center;
    background: #4b4b4b;
    border-right: 2px solid var(--edge);
}

.stepper svg {
    width: 18px;
    height: 34px;
}

.drop {
    appearance: none;
    font-size: 20px;
    color: #f5f5f5;
    padding: 4px 0 0 5px;
    border: 2px solid var(--edge);
    border-radius: 4px;
    background:
        url("data:image/svg+xml,%3Csvg xmlns='http://www.w3.org/2000/svg' width='18' height='18' viewBox='0 0 20 20'%3E%3Cpath d='M3 6l7 7 7-7' fill='none' stroke='%23f0f0f0' stroke-width='3'/%3E%3C/svg%3E") no-repeat right 9px center,
        linear-gradient(var(--edge), var(--edge)) no-repeat right 35px center / 2px 100%,
        linear-gradient(#4b4b4b, #4b4b4b) no-repeat right / 35px 100%,
        var(--field);
}

.field .drop {
    width: 126px;
    border: 0;
}

.stroke-field {
    margin-right: 11px;
}

.profile {
    display: flex;
    align-items: center;
    height: 42px;
    margin-right: 11px;
    background: #595959;
    color: #707070;
}

.profile i {
    width: 180px;
    height: 42px;
    background: #808080;
}

.profile svg {
    width: 18px;
    height: 18px;
    margin: 0 10px;
}

.brush {
    width: 211px;
    height: 42px;
    margin-right: 15px;
    padding: 2px 0 0 14px;
    color: #111;
    background-color: #e3e3e3;
}

.opacity {
    width: 141px;
    margin: 0 11px 0 8px;
}

.opacity input {
    flex: 1;
    width: 60px;
    padding: 4px 0 0 5px;
}

.go {
    width: 36px;
    display: grid;
    place-items: center;
    border-left: 2px solid var(--edge);
    background: #4b4b4b;
}

.go svg {
    width: 18px;
    height: 20px;
}

.style-label {
    color: #b8b8b8;
    margin-right: 11px;
}

.outline {
    width: 129px;
    height: 38px;
    margin-right: 9px;
    border: 2px solid #777;
    border-radius: 4px;
}

.similar {
    margin: 0 13px 0 11px;
    gap: 8px;
}

.sm {
    width: 18px;
    height: 18px;
}

.options .hair:last-of-type {
    margin-right: 28px;
}

.opt-right {
    display: flex;
    align-items: center;
    gap: 22px;
    margin-left: auto;
    margin-right: 34px;
}

.opt-right .dim {
    color: #777;
    margin: 0 14px 0 -6px;
}

/* Work area */
.work {
    display: grid;
    grid-template-columns: 148px minmax(0, 1fr) 81px 80px 497px;
    min-height: 0;
    border-bottom: 4px solid #3c3f46;
}

.dock-head {
    display: flex;
    align-items: center;
    height: 24px;
    padding: 0 11px;
    background: var(--dark);
    border-bottom: 2px solid var(--line);
    color: #d0d0d0;
}

.dock-head.end {
    justify-content: flex-end;
}

.dock-head svg {
    width: 16px;
    height: 12px;
}

.grip {
    display: block;
    width: 38px;
    height: 8px;
    margin: 0 auto;
    background: repeating-linear-gradient(90deg, #3a3a3a 0 2px, transparent 2px 4px);
}

.tools {
    border-left: 2px solid var(--line);
    border-right: 5px solid var(--line);
    overflow: hidden;
}

.tools > .grip {
    margin: 6px auto 24px;
}

.tool-grid {
    display: grid;
    grid-template-columns: 60px 60px;
    grid-auto-rows: 48px;
    padding: 0 10px 6px;
    border-bottom: 2px solid #4c4c4c;
}

.tool-grid button {
    position: relative;
    display: grid;
    place-items: center;
    margin: 2px;
    border-radius: 4px;
}

.tool-grid svg {
    width: 34px;
    height: 34px;
}

.on {
    background: #2e2e2e;
}

.more::after {
    content: "";
    position: absolute;
    right: 0;
    bottom: 2px;
    width: 7px;
    height: 7px;
    background: linear-gradient(135deg, transparent 50%, var(--icon) 50%);
}

.colors {
    position: relative;
    height: 120px;
    margin: 6px 10px 0;
}

.big-fs {
    width: 108px;
    height: 108px;
}

.swap {
    position: absolute;
    left: 89px;
    top: 2px;
    width: 24px;
    height: 24px;
    color: var(--icon);
}

.deflt {
    position: absolute;
    left: 0;
    top: 82px;
    width: 24px;
    height: 24px;
}

.modes {
    display: flex;
    width: 120px;
    height: 42px;
    margin: 0 0 8px 9px;
    border: 2px solid #5f5f5f;
    border-radius: 4px;
}

.modes button {
    flex: 1;
    display: grid;
    place-items: center;
}

.modes button + button {
    border-left: 2px solid #5f5f5f;
}

.modes svg {
    width: 26px;
    height: 26px;
}

.modes.low {
    height: 38px;
    margin-bottom: 14px;
}

.screen {
    margin: 0 auto 43px;
}

.dots3 {
    margin: 0 auto;
}

/* Document */
.document {
    display: grid;
    grid-template-rows: 58px minmax(0, 1fr);
    min-width: 0;
}

.doc-tabs {
    background: var(--dark);
    border-bottom: 2px solid var(--line);
}

.doc-tab {
    display: flex;
    align-items: center;
    justify-content: space-between;
    width: 470px;
    height: 56px;
    padding: 0 13px 2px 20px;
    background: var(--bg);
    border-right: 2px solid var(--line);
    white-space: nowrap;
}

.view {
    display: grid;
    grid-template-columns: minmax(0, 1fr) 32px;
    grid-template-rows: minmax(0, 1fr) 50px 32px;
    min-height: 0;
}

.canvas {
    position: relative;
    background: #606060;
    border-bottom: 2px solid #4a4a4a;
}

.artboard {
    position: absolute;
    width: 345px;
    height: 345px;
    background: #fff;
    border: 2px solid #8a8a8a;
    box-shadow: 1px 2px 2px #444;
}

.a1 {
    left: 42px;
    top: 258px;
}

.a2 {
    left: 432px;
    top: 740px;
}

.a3 {
    left: 918px;
    top: 650px;
}

.a4 {
    left: 1308px;
    top: 152px;
}

.vscroll {
    grid-row: 1 / 3;
    grid-column: 2;
    display: flex;
    flex-direction: column;
    align-items: center;
    justify-content: space-between;
    padding: 719px 0 8px;
    background: #494949;
    color: #a0a0a0;
}

.vscroll i {
    width: 30px;
    height: 50px;
    border-radius: 15px;
    background: #636363;
}

.vscroll svg {
    width: 18px;
    height: 18px;
}

.hint {
    display: flex;
    align-items: center;
    gap: 22px;
    padding: 0 0 2px 10px;
    color: #c4c4c4;
    font-size: 22px;
    white-space: nowrap;
}

.hint i {
    margin: 0 10px;
}

.status {
    grid-column: 1 / 3;
    display: flex;
    overflow: hidden;
    padding-left: 7px;
}

.status .drop {
    width: 138px;
    height: 40px;
    margin-right: 8px;
}

.status .boards {
    width: 116px;
    margin-left: 9px;
}

.nav {
    width: 33px;
    justify-content: center;
}

.state {
    flex: none;
    width: 402px;
    line-height: 38px;
    text-align: center;
    color: #c4c4c4;
    font-size: 20px;
    border: solid #4b4b4b;
    border-width: 0 2px;
    margin-left: 10px;
}

.play {
    width: 34px;
    justify-content: center;
}

.hscroll {
    flex: 1;
    display: flex;
    align-items: center;
    justify-content: space-between;
    margin-right: 32px;
    padding: 0 8px;
    background: #494949;
    color: #a0a0a0;
}

.hscroll i {
    width: 50px;
    height: 30px;
    border-radius: 15px;
    background: #636363;
}

.hscroll svg {
    width: 18px;
    height: 20px;
}

/* Docks */
.spare, .icon-dock, .panels {
    border-left: 5px solid var(--line);
    min-width: 0;
}

.group {
    border-bottom: 2px solid var(--line);
    padding: 6px 8px 6px;
}

.group .grip {
    margin-bottom: 4px;
}

.group button {
    display: grid;
    place-items: center;
    width: 56px;
    height: 48px;
    margin: 4px auto;
    border-radius: 4px;
}

.group button:first-of-type {
    margin-top: 8px;
}

.group button + button {
    margin-top: 8px;
}

.group .on {
    border: 2px solid var(--edge);
    background: #333;
}

.group svg {
    width: 38px;
    height: 38px;
}

.panels {
    display: flex;
    flex-direction: column;
    border-right: 3px solid var(--line);
}

.tabs {
    display: flex;
    background: var(--dark);
    border-bottom: 2px solid var(--line);
}

.tab {
    display: flex;
    align-items: center;
    padding: 0 20px 4px;
    border-right: 2px solid var(--line);
    color: #9f9f9f;
    white-space: nowrap;
}

.tab.active {
    margin-bottom: -2px;
    padding-bottom: 6px;
    background: var(--bg);
    color: #fff;
}

.pmenu {
    margin-left: auto;
    margin-right: 11px;
}

.pmenu svg {
    width: 20px;
    height: 16px;
}

.color-panel .tabs {
    height: 54px;
}

.color-panel .tab {
    padding: 0 18px 6px 8px;
    gap: 12px;
}

.tw {
    width: 11px;
    height: 20px;
    color: #aaa;
}

.color-body {
    display: flex;
    padding: 12px 36px 0 10px;
}

.color-left {
    display: flex;
    flex-wrap: wrap;
    align-content: flex-start;
    gap: 10px 18px;
    width: 90px;
}

.ic24 {
    width: 24px;
    height: 24px;
    color: var(--icon);
}

.fs60 {
    width: 60px;
    height: 60px;
}

.sliders {
    flex: 1;
    display: grid;
    grid-template-columns: 32px minmax(0, 1fr) 72px 21px;
    grid-auto-rows: 50px;
    column-gap: 4px;
    margin-top: 4px;
    font-size: 20px;
    color: #c0c0c0;
}

.sliders label {
    text-align: center;
    width: 24px;
    line-height: 46px;
}

.sliders span {
    line-height: 46px;
}

.sliders input:not([type]), #hex {
    height: 42px;
    padding-left: 6px;
    border: 2px solid #5f5f5f;
    border-radius: 4px;
    background: var(--field);
    color: #fff;
    font-size: 20px;
}

input[type="range"] {
    appearance: none;
    width: 222px;
    height: 28px;
    margin: 14px 0 0 -4px;
    background-color: transparent;
    background-repeat: no-repeat;
    background-position: 10px 1px;
    background-size: 202px 8px;
}

input[type="range"]::-webkit-slider-thumb {
    appearance: none;
    width: 18px;
    height: 17px;
    margin-top: 6px;
    background: var(--icon);
    clip-path: polygon(50% 0, 100% 50%, 100% 100%, 0 100%, 0 50%);
}

.sliders .c {
    background-image: linear-gradient(90deg, #fff, #00aeea 70%, #0f96dc);
}

.sliders .m {
    background-image: linear-gradient(90deg, #fff, #e4007f 95%);
}

.sliders .y {
    background-image: linear-gradient(90deg, #fff, #fff000 90%);
}

.sliders .k {
    background-image: linear-gradient(90deg, #fff, #555 80%, #231815);
}

.hexrow {
    display: flex;
    align-items: center;
    padding: 5px 31px 0 10px;
    font-size: 20px;
}

.mini {
    display: flex;
    gap: 2px;
    margin-right: auto;
    padding: 2px;
    background: #2c2c2c;
}

.mini i, .mini svg {
    width: 24px;
    height: 24px;
    background: #fff;
}

.mini .bk {
    background: #050202;
}

.hexrow .under {
    margin-right: 12px;
}

#hex {
    width: 130px;
    padding-left: 8px;
}

.spectrum {
    position: relative;
    height: 380px;
    margin: 12px 31px 10px 11px;
    border: 2px solid #2c2c2c;
    background:
        linear-gradient(#fff, rgba(255, 255, 255, 0.5) 25%, rgba(255, 255, 255, 0.12) 43%, rgba(255, 255, 255, 0) 56%),
        linear-gradient(90deg, #e81519, #f49a1a 9%, #f5ec30 17%, #8cc42a 26%, #69b72e 34%, #70c5c8 48%, #30b8ee 54%, #1b479c 66%, #a9519a 82%, #ee2288 90%, #e81519);
}

/* Darker half of the ramp has its own hues */
.spectrum::before {
    content: "";
    position: absolute;
    inset: 0;
    background: linear-gradient(90deg, #a02020, #b88c18 10%, #b4b020 17%, #28ac34 28%, #18ac44 38%, #08a898 50%, #0468a8 56%, #003094 66%, #5a1a88 76%, #980080 84%, #b80c70 90%, #a81820);
    mask-image: linear-gradient(transparent 50%, #000 74%);
}

.spectrum::after {
    content: "";
    position: absolute;
    inset: 0;
    background: linear-gradient(transparent 56%, rgba(0, 0, 0, 0.2) 70%, rgba(0, 0, 0, 0.6) 84%, rgba(0, 0, 0, 0.9) 94%, #000 99%);
}

.swatches {
    flex: 1;
    display: flex;
    flex-direction: column;
    min-height: 0;
    border-top: 6px solid var(--line);
}

.swatches .tabs {
    height: 54px;
}

.sw-head {
    display: flex;
    align-items: flex-end;
    padding: 13px 9px 11px 10px;
}

.box {
    width: 52px;
    height: 52px;
    margin-left: auto;
    margin-right: 10px;
    display: grid;
    place-items: center;
    border: 2px solid #777;
    border-radius: 4px;
}

.toggle {
    display: flex;
    border: 2px solid #5f5f5f;
    border-radius: 4px;
}

.toggle button {
    width: 47px;
    height: 48px;
    display: grid;
    place-items: center;
}

.sw-list {
    flex: 1;
    margin: 0 9px 0 10px;
    border: 2px solid #5f5f5f;
}

.sw-row {
    display: flex;
    gap: 2px;
    margin-bottom: 2px;
}

.group-row {
    margin: 6px 0;
}

.sw-row i {
    width: 26px;
    height: 26px;
    overflow: hidden;
}

.sw-row svg {
    width: 26px;
    height: 26px;
}

.sw-row .folder {
    padding: 4px 1px;
    color: var(--icon);
}

.sw-row .folder svg {
    width: 24px;
    height: 20px;
}

.reg {
    background: #eee;
}

.sel {
    background: #fff;
    border: 2px solid #fff;
    box-shadow: inset 0 0 0 2px #000;
}

.g1 {
    background: linear-gradient(90deg, #fff, #060303);
}

.g2 {
    background: linear-gradient(90deg, #d8e2f2, #1c8cca 70%, #0c62ac);
}

.g3 {
    background: linear-gradient(90deg, #ef6ea2, transparent), repeating-conic-gradient(#ccc 0 25%, #fff 0 50%) 0 0 / 8px 8px;
}

.g4 {
    background: radial-gradient(#fff6e8, #f08f28 60%);
}

.p1 {
    padding: 2px;
    background: #fff;
}

.p1 b {
    display: block;
    height: 22px;
    border: 1px solid #d8c878;
    border-radius: 50%;
    background: repeating-conic-gradient(#ccc 0 25%, #fff 0 50%) 0 0 / 8px 8px;
}

.p2 {
    background: #2a5c9c;
}

.p3 {
    background:
        radial-gradient(circle at 20% 20%, #b5c95a 4px, transparent 5px),
        radial-gradient(circle at 60% 35%, #7fb3bd 4px, transparent 5px),
        radial-gradient(circle at 35% 65%, #7fb3bd 4px, transparent 5px),
        radial-gradient(circle at 85% 75%, #b5c95a 4px, transparent 5px),
        radial-gradient(circle at 85% 15%, #b9d6a0 4px, transparent 5px),
        #eadfb5;
}

.sw-foot {
    display: flex;
    align-items: center;
    gap: 26px;
    height: 39px;
    padding: 0 54px 0 21px;
}

.sw-foot > :first-child {
    margin-right: -6px;
}

/* Floating panel */
.float {
    position: absolute;
    left: 1822px;
    top: 148px;
    width: 484px;
    border: 2px solid var(--line);
    border-top: 8px solid #333;
    background: var(--bg);
    box-shadow: 0 4px 10px rgba(0, 0, 0, 0.4);
}

.float .tabs {
    height: 54px;
}

.float .tab {
    padding-left: 21px;
    padding-right: 18px;
}

.fmenu {
    display: flex;
    align-items: center;
    gap: 14px;
    margin-left: auto;
    margin-right: 11px;
    color: var(--icon);
}

.fmenu i {
    width: 2px;
    height: 24px;
    background: #8a8a8a;
}

.fmenu .ex {
    width: 20px;
    height: 16px;
}

.fmenu .mn {
    width: 20px;
    height: 16px;
}

.list {
    height: 264px;
    margin: 12px 10px 0;
    border: 2px solid #5f5f5f;
    border-radius: 4px;
}

.list table {
    width: 100%;
    border-collapse: collapse;
    table-layout: fixed;
}

.list td {
    height: 38px;
    padding: 0 0 0 11px;
    border-bottom: 2px solid #5f5f5f;
    border-right: 2px solid #5f5f5f;
    font-size: 21px;
    line-height: 24px;
    color: #e6e6e6;
}

.list td:first-child {
    width: 82px;
    font-size: 24px;
    color: #fff;
}

.list td:last-child {
    width: 81px;
    border-right: 0;
}

.list svg {
    width: 26px;
    height: 28px;
    color: #d0d0d0;
}

.list .on {
    background: #4f657d;
}

.float-foot {
    display: flex;
    align-items: center;
    gap: 29px;
    height: 39px;
    padding: 0 55px 0 24px;
}

.off {
    color: #757575;
}

.resize {
    padding: 3px 0;
    border-top: 3px solid var(--line);
}

/* Dialog */
.dialog {
    position: absolute;
    left: 1515px;
    top: 756px;
    width: 626px;
    height: 533px;
    border: 1px solid #686868;
    border-radius: 14px;
    background: var(--bg);
    box-shadow: 0 16px 40px rgba(0, 0, 0, 0.3);
    overflow: hidden;
}

.dialog h2 {
    height: 56px;
    padding-left: 14px;
    background: #f3f3f3;
    color: #8c8c8c;
    font-size: 25px;
    font-weight: 400;
    line-height: 52px;
}

.form {
    display: grid;
    grid-template-columns: 132px minmax(0, 1fr);
    grid-template-rows: 38px 44px 42px 42px 30px;
    align-items: center;
    row-gap: 20px;
    column-gap: 6px;
    padding: 42px 0 0;
    color: #c8c8c8;
}

.lbl {
    text-align: right;
}

.count {
    padding-left: 7px;
    font-size: 22px;
}

.layout-row {
    display: flex;
    align-items: center;
    white-space: nowrap;
}

.layout-row span {
    width: 162px;
    margin-left: 20px;
}

.seg {
    display: flex;
    border: 2px solid #5f5f5f;
    border-radius: 4px;
}

.seg button {
    width: 45px;
    height: 40px;
    display: grid;
    place-items: center;
}

.layout-row .seg:last-child button {
    width: 43px;
}

.seg button + button {
    border-left: 1px solid #5f5f5f;
}

.seg .on {
    color: #fff;
}

.form .field {
    width: 182px;
    font-size: 22px;
    color: #fff;
}

.form .field input {
    flex: 1;
    width: 100px;
    padding: 2px 0 0 6px;
}

.form .off {
    color: #707070;
}

.form .field.off {
    color: #707070;
    border-color: #595959;
    background: #595959;
}

.field.off .stepper {
    background: #595959;
    border-color: #535353;
}

.check {
    grid-column: 2;
    display: flex;
    align-items: center;
    gap: 11px;
    padding-left: 2px;
    color: #fff;
    font-size: 26px;
}

.check input {
    appearance: none;
    width: 24px;
    height: 24px;
    border-radius: 3px;
    background: #c8c8c8 url("data:image/svg+xml,%3Csvg xmlns='http://www.w3.org/2000/svg' viewBox='0 0 24 24'%3E%3Cpath d='M5 13l5 5 9-12' fill='none' stroke='%23474747' stroke-width='4'/%3E%3C/svg%3E");
}

.actions {
    display: flex;
    justify-content: flex-end;
    gap: 10px;
    padding: 44px 30px 0 0;
}

.actions button {
    width: 184px;
    height: 52px;
    border: 2px solid #fff;
    border-radius: 26px;
    color: #fff;
}

.actions .ok {
    border-width: 4px;
}

.callout {
    position: absolute;
    left: 1790px;
    top: 460px;
    width: 130px;
    height: 350px;
}

/* Taskbar */
.taskbar {
    display: flex;
    align-items: center;
    background: linear-gradient(90deg, #1c212b, #1a2231 20%, #13204f 24%, #10205e 27%, #11254f 30%, #10205c 37%, #1b1f38 51%, #12205a 57%, #12205a 64%, #20222a 68%, #1a2230 76%, #1a2331);
}

.weather {
    margin-left: 38px;
    margin-right: 413px;
}

.apps {
    display: flex;
}

.apps button {
    position: relative;
    width: 88px;
    height: 94px;
    display: grid;
    place-items: center;
}

.apps svg {
    width: 48px;
    height: 48px;
}

.run::after {
    content: "";
    position: absolute;
    bottom: 10px;
    left: 38px;
    width: 12px;
    height: 6px;
    border-radius: 3px;
    background: #a4a9c0;
}

.tray {
    display: flex;
    align-items: center;
    gap: 36px;
    margin-left: auto;
    margin-right: 41px;
}

.net {
    display: flex;
    align-items: center;
    gap: 14px;
}

.clock {
    display: flex;
    flex-direction: column;
    align-items: flex-end;
    gap: 2px;
    font-size: 24px;
    margin-left: -6px;
    margin-right: -20px;
    color: #fff;
}
```
